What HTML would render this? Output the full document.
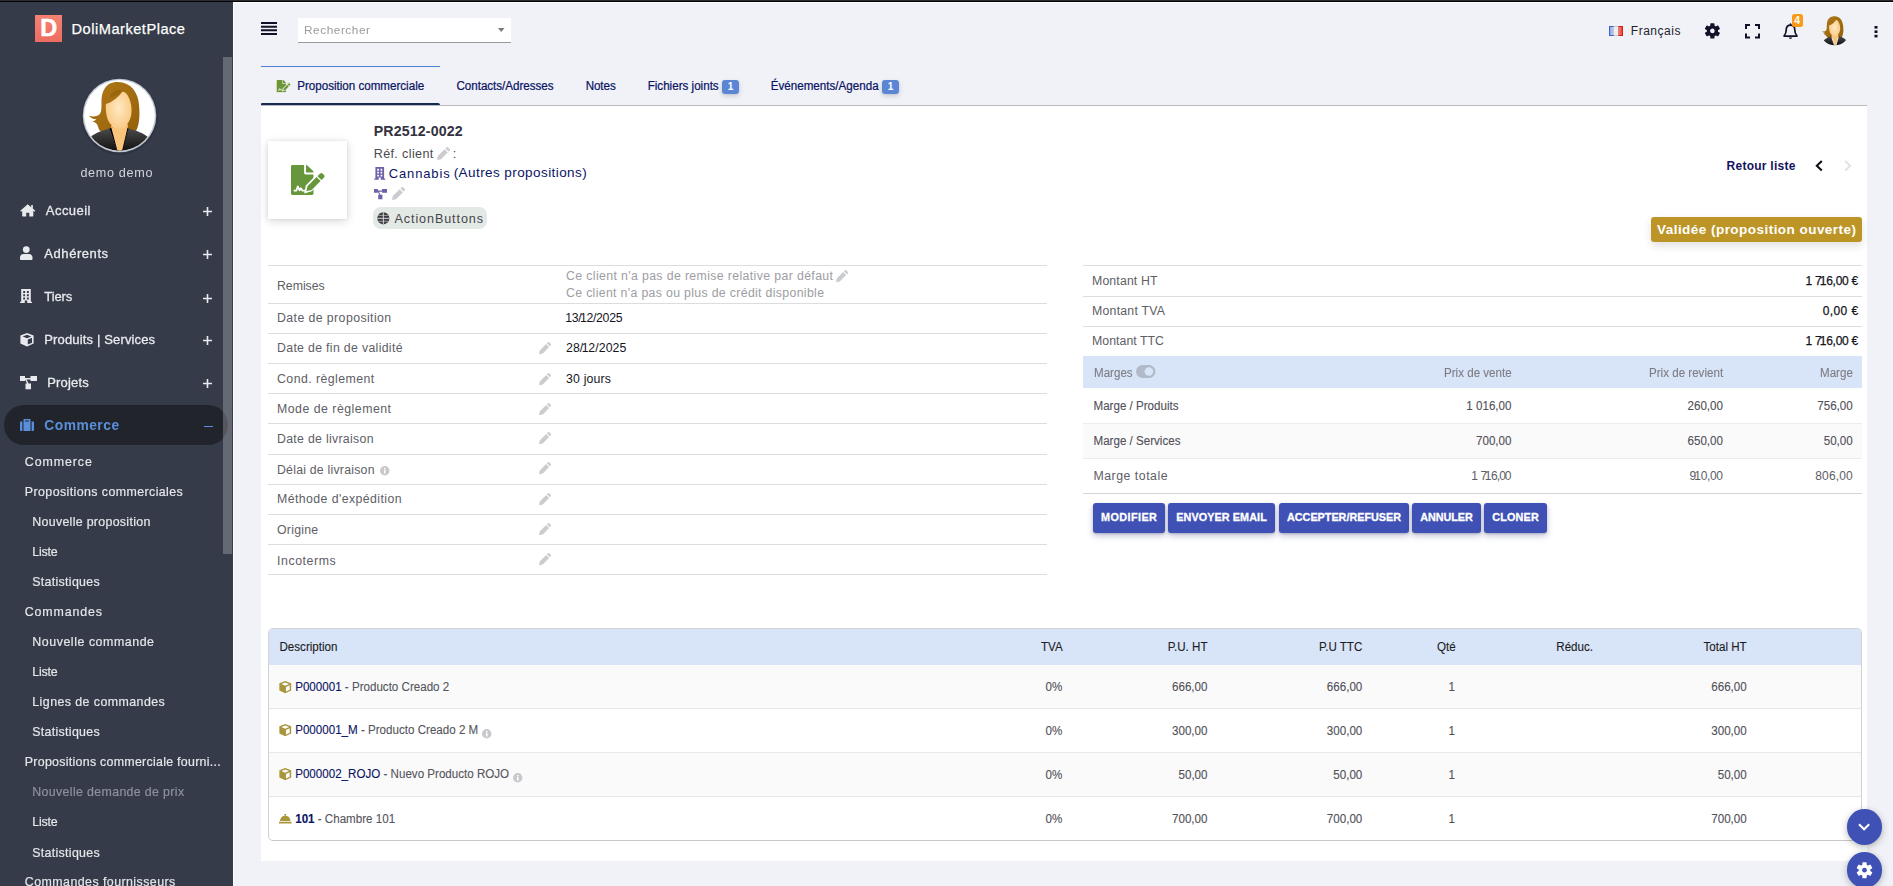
<!DOCTYPE html>
<html lang="fr"><head><meta charset="utf-8"><title>PR2512-0022 - Proposition commerciale</title>
<style>
html,body{margin:0;padding:0;}
body{width:1893px;height:886px;overflow:hidden;background:#f1f2f7;font-family:"Liberation Sans",sans-serif;position:relative;}
.t{position:absolute;white-space:nowrap;font-family:"Liberation Sans",sans-serif;}
.a{position:absolute;}
svg{position:absolute;overflow:visible;}
.hl{position:absolute;height:1px;background:#dcdcdc;}
.btn{position:absolute;top:503px;height:30px;background:#3f51b5;border-radius:3px;box-shadow:0 3px 6px rgba(40,50,120,.28),0 1px 2px rgba(0,0,0,.18);}
</style></head><body>
<div class="a" style="left:0;top:0;width:233px;height:886px;background:#353b48;"></div>
<div class="a" style="left:233px;top:2px;width:1px;height:884px;background:#fff;"></div>
<div class="a" style="left:4px;top:405px;width:224px;height:40px;border-radius:20px;background:#21242b;"></div>
<div class="a" style="left:223px;top:57px;width:9px;height:497px;background:rgba(255,255,255,.24);"></div>
<div class="a" style="left:0;top:0;width:1893px;height:1px;background:#2b2b33;z-index:5;"></div><div class="a" style="left:0;top:1px;width:1893px;height:1px;background:#030304;z-index:5;"></div><div class="a" style="left:233px;top:2px;width:1660px;height:1px;background:#fff;"></div>
<div class="a" style="left:35px;top:15px;width:27px;height:27px;background:linear-gradient(#f58273,#ee6c60);"></div>
<span class="t" style="top:12.20px;font-size:23.5px;line-height:33px;color:#fff;font-weight:700;left:40.30px;-webkit-text-stroke:.5px;">D</span>
<span class="t" style="top:19.00px;font-size:14.6px;line-height:20px;color:#fff;letter-spacing:0.517px;left:71.50px;-webkit-text-stroke:.25px;">DoliMarketPlace</span>
<svg style="left:81px;top:77px" width="77" height="77" viewBox="0 0 77 77">
<defs><radialGradient id="fc" cx="50%" cy="40%" r="60%"><stop offset="0" stop-color="#ffe9c4"/><stop offset="1" stop-color="#f9c57c"/></radialGradient>
<linearGradient id="jk" x1="0" y1="0" x2="0" y2="1"><stop offset="0" stop-color="#4a4a4a"/><stop offset="1" stop-color="#0a0a0a"/></linearGradient>
<linearGradient id="hr" x1="0" y1="0" x2="1" y2="1"><stop offset="0" stop-color="#b07a18"/><stop offset="1" stop-color="#96600a"/></linearGradient>
<clipPath id="cp"><circle cx="38.5" cy="38.5" r="35.2"/></clipPath></defs>
<circle cx="38.5" cy="39.500" r="38.500" fill="rgba(0,0,0,.10)"/>
<circle cx="38.5" cy="38.5" r="36.800" fill="#bfc7d6"/>
<circle cx="38.5" cy="38.5" r="35.400" fill="#fff"/>
<g clip-path="url(#cp)">
<path d="M37 5 C25 4.500 20.500 14 20.500 25 C20.500 34 20.500 37.500 15.500 39 C11.500 40 8 38.800 8 38.800 C10 41.500 13 42.500 15.500 42.300 C14 44 11.500 44.500 11.500 44.500 C18 46 16.500 51 19 54 L55 54 C58.500 48 59 38 58 28 C57 15 50 5.500 37 5 Z" fill="url(#hr)"/>
<path d="M24.800 27 C24.500 38 26.500 44.500 30.500 48 L29.500 56 L47.500 56 L46.500 46.500 C50 42.500 51.200 36 50.200 28.500 C48.500 18.500 44.500 14.500 41.300 14.800 C37.500 20 31 25.500 24.800 27 Z" fill="url(#fc)"/>
<path d="M28.500 20.500 C33 20.500 38.500 16.500 41.500 13.500 C37 11.500 30.500 13.500 28.500 20.500 Z" fill="#9a650c"/>
<path d="M8 62 C11 57 20 54 28.500 51.500 L36 73 L41 73 L47.500 51.500 C55 53.500 63 56 68 61 L62 77 L14 77 Z" fill="url(#jk)"/>
<path d="M28.500 51.500 L31.500 50 L38 74 L36 74 Z" fill="#000"/><path d="M47.500 51.500 L45.500 50 L39.500 74 L41.500 74 Z" fill="#000"/>
<path d="M30 49.500 L36.500 74 L41 74 L46.800 49.500 C42 52.500 35 52.500 30 49.500 Z" fill="#f9c57c"/>
</g></svg>
<div class="a" style="left:0;top:0;width:222px;height:886px;will-change:transform;">
<span class="t" style="top:164.20px;font-size:12.6px;line-height:18px;color:#d3d6db;letter-spacing:0.687px;left:80.40px;">demo demo</span>
<svg style="left:20px;top:204px" width="15.500" height="12.500" viewBox="0 0 16 13"><path fill="#e9eaee" d="M8 0.300 L0.200 6.900 L1.100 8 L2.200 7.100 V12.300 a.7 .7 0 0 0 .7 .7 H6.400 V9 H9.600 V13 H13.100 a.7 .7 0 0 0 .7 -.7 V7.100 L14.900 8 L15.800 6.900 L13.300 4.800 V1 H11.600 V3.300 Z"/></svg>
<span class="t" style="top:201.60px;font-size:13px;line-height:18px;color:#e9eaee;letter-spacing:0.466px;left:45.80px;-webkit-text-stroke:.3px;">Accueil</span>
<svg style="left:203px;top:207.4px" width="9" height="9" viewBox="0 0 9 9"><path d="M4.500 0V9M0 4.500H9" stroke="#e9eaee" stroke-width="1.600" fill="none"/></svg>
<svg style="left:20px;top:246px" width="12.500" height="14" viewBox="0 0 12.500 14"><circle cx="6.250" cy="3.600" r="3.400" fill="#e9eaee"/><path fill="#e9eaee" d="M0 13 V11.400 C0 9.300 1.600 8 3.500 8 H9 C10.900 8 12.500 9.300 12.500 11.400 V13 a1 1 0 0 1 -1 1 H1 a1 1 0 0 1 -1 -1Z"/></svg>
<span class="t" style="top:244.60px;font-size:13px;line-height:18px;color:#e9eaee;letter-spacing:0.566px;left:44.30px;-webkit-text-stroke:.3px;">Adhérents</span>
<svg style="left:203px;top:250.2px" width="9" height="9" viewBox="0 0 9 9"><path d="M4.500 0V9M0 4.500H9" stroke="#e9eaee" stroke-width="1.600" fill="none"/></svg>
<svg style="left:20px;top:289.300px" width="12" height="14" viewBox="0 0 12 14"><path fill-rule="evenodd" fill="#e9eaee" d="M1.200 0 H10.800 V12.800 H12 V14 H7.200 V11.600 H4.800 V14 H0 V12.800 H1.200 Z M3.200 2 V4 H5.100 V2 Z M6.900 2 V4 H8.800 V2Z M3.200 5.300 V7.300 H5.100 V5.300Z M6.900 5.300 V7.300H8.800V5.300Z M3.200 8.600 V10.600 H5.100 V8.600Z M6.900 8.600V10.600H8.800V8.600Z"/></svg>
<span class="t" style="top:288.00px;font-size:13px;line-height:18px;color:#e9eaee;letter-spacing:-0.128px;left:44.30px;-webkit-text-stroke:.3px;">Tiers</span>
<svg style="left:203px;top:293.5px" width="9" height="9" viewBox="0 0 9 9"><path d="M4.500 0V9M0 4.500H9" stroke="#e9eaee" stroke-width="1.600" fill="none"/></svg>
<svg style="left:20px;top:332.600px" width="14" height="13.600" viewBox="0 0 14 13.600"><path fill-rule="evenodd" fill="#e9eaee" d="M7 0 L13.600 2.600 V10.600 L7 13.600 L0.400 10.600 V2.600 Z M7 1.700 L2.700 3.400 L7 5.200 L11.300 3.400 Z M7.800 6.600 V11.600 L12 9.700 V4.800 Z"/></svg>
<span class="t" style="top:330.70px;font-size:13px;line-height:18px;color:#e9eaee;letter-spacing:0.147px;left:44.30px;-webkit-text-stroke:.3px;">Produits | Services</span>
<svg style="left:203px;top:336.2px" width="9" height="9" viewBox="0 0 9 9"><path d="M4.500 0V9M0 4.500H9" stroke="#e9eaee" stroke-width="1.600" fill="none"/></svg>
<svg style="left:20px;top:375.500px" width="17" height="13.200" viewBox="0 0 17 13.200"><path fill="#e9eaee" d="M0 0 H5 V2 H10.500 V0 H17 V5 H10.500 V3.400 H6.500 L8.600 7.600 H11 V13.200 H5.500 V7.600 H7 L5 3.600 V5 H0 Z"/></svg>
<span class="t" style="top:373.70px;font-size:13px;line-height:18px;color:#e9eaee;letter-spacing:0.172px;left:47.20px;-webkit-text-stroke:.3px;">Projets</span>
<svg style="left:203px;top:379.2px" width="9" height="9" viewBox="0 0 9 9"><path d="M4.500 0V9M0 4.500H9" stroke="#e9eaee" stroke-width="1.600" fill="none"/></svg>
<svg style="left:20px;top:419.300px" width="14" height="12" viewBox="0 0 14 12"><path fill-rule="evenodd" fill="#5b8fdb" d="M4.300 0 H9.700 a.8 .8 0 0 1 .8 .8 V12 H3.500 V.8 a.8 .8 0 0 1 .8 -.8 Z M5 1.500 V2.600 H9 V1.500 Z M0 3.600 a1 1 0 0 1 1 -1 H2.400 V12 H1 a1 1 0 0 1 -1 -1 Z M11.600 2.600 H13 a1 1 0 0 1 1 1 V11 a1 1 0 0 1 -1 1 H11.600 Z"/></svg>
<span class="t" style="top:416.20px;font-size:13.8px;line-height:19px;color:#5b8fdb;font-weight:700;letter-spacing:0.495px;left:44.30px;">Commerce</span>
<div class="a" style="left:204px;top:426.200px;width:9px;height:1.300px;background:#5b8fdb;"></div>
<span class="t" style="top:453.50px;font-size:12.4px;line-height:17px;color:#e4e6ea;letter-spacing:0.916px;left:24.80px;-webkit-text-stroke:.2px;">Commerce</span>
<span class="t" style="top:483.60px;font-size:12.4px;line-height:17px;color:#e4e6ea;letter-spacing:0.414px;left:24.80px;-webkit-text-stroke:.2px;">Propositions commerciales</span>
<span class="t" style="top:513.50px;font-size:12.4px;line-height:17px;color:#e4e6ea;letter-spacing:0.301px;left:32.30px;-webkit-text-stroke:.2px;">Nouvelle proposition</span>
<span class="t" style="top:543.80px;font-size:12.4px;line-height:17px;color:#e4e6ea;letter-spacing:-0.222px;left:32.30px;-webkit-text-stroke:.2px;">Liste</span>
<span class="t" style="top:573.70px;font-size:12.4px;line-height:17px;color:#e4e6ea;letter-spacing:0.304px;left:32.30px;-webkit-text-stroke:.2px;">Statistiques</span>
<span class="t" style="top:603.50px;font-size:12.4px;line-height:17px;color:#e4e6ea;letter-spacing:0.868px;left:24.80px;-webkit-text-stroke:.2px;">Commandes</span>
<span class="t" style="top:633.60px;font-size:12.4px;line-height:17px;color:#e4e6ea;letter-spacing:0.547px;left:32.30px;-webkit-text-stroke:.2px;">Nouvelle commande</span>
<span class="t" style="top:663.70px;font-size:12.4px;line-height:17px;color:#e4e6ea;letter-spacing:-0.222px;left:32.30px;-webkit-text-stroke:.2px;">Liste</span>
<span class="t" style="top:693.80px;font-size:12.4px;line-height:17px;color:#e4e6ea;letter-spacing:0.435px;left:32.30px;-webkit-text-stroke:.2px;">Lignes de commandes</span>
<span class="t" style="top:723.70px;font-size:12.4px;line-height:17px;color:#e4e6ea;letter-spacing:0.304px;left:32.30px;-webkit-text-stroke:.2px;">Statistiques</span>
<span class="t" style="top:753.80px;font-size:12.4px;line-height:17px;color:#e4e6ea;letter-spacing:0.281px;left:24.80px;-webkit-text-stroke:.2px;">Propositions commerciale fourni...</span>
<span class="t" style="top:783.90px;font-size:12.4px;line-height:17px;color:#8c919b;letter-spacing:0.341px;left:32.30px;-webkit-text-stroke:.2px;">Nouvelle demande de prix</span>
<span class="t" style="top:813.80px;font-size:12.4px;line-height:17px;color:#e4e6ea;letter-spacing:-0.222px;left:32.30px;-webkit-text-stroke:.2px;">Liste</span>
<span class="t" style="top:844.60px;font-size:12.4px;line-height:17px;color:#e4e6ea;letter-spacing:0.304px;left:32.30px;-webkit-text-stroke:.2px;">Statistiques</span>
<span class="t" style="top:874.40px;font-size:12.4px;line-height:17px;color:#e4e6ea;letter-spacing:0.443px;left:24.80px;-webkit-text-stroke:.2px;">Commandes fournisseurs</span>
</div>
<svg style="left:261px;top:22px" width="16" height="13" viewBox="0 0 16 13"><path d="M0 1H16M0 4.670H16M0 8.330H16M0 12H16" stroke="#111127" stroke-width="2" fill="none"/></svg>
<div class="a" style="left:298px;top:18px;width:213px;height:24px;background:#fff;border-bottom:1px solid #9a9a9a;"></div>
<span class="t" style="top:22.10px;font-size:11.8px;line-height:17px;color:#9b9b9b;letter-spacing:0.556px;left:303.50px;will-change:transform;">Rechercher</span>
<svg style="left:498px;top:28px" width="6.500" height="4" viewBox="0 0 6.500 4"><path d="M0 0H6.500L3.250 4Z" fill="#7a7a7a"/></svg>
<svg style="left:1609px;top:26px" width="14" height="10" viewBox="0 0 14 10"><defs><linearGradient id="fb" x1="0" x2="1"><stop offset="0" stop-color="#8ea9e6"/><stop offset="1" stop-color="#c4d1f0"/></linearGradient><linearGradient id="fr" x1="0" x2="1"><stop offset="0" stop-color="#f08a7c"/><stop offset="1" stop-color="#e84a3e"/></linearGradient></defs><rect x="0" y="0" width="5" height="10" fill="#3a66cc"/><rect x="1" y="1" width="3.700" height="8" fill="url(#fb)"/><rect x="4.700" y="0" width="4.600" height="10" fill="#c9c9cc"/><rect x="4.700" y="1" width="4.600" height="8" fill="#efefef"/><rect x="9.300" y="0" width="4.700" height="10" fill="#d91c1c"/><rect x="9.300" y="1" width="3.700" height="8" fill="url(#fr)"/></svg>
<span class="t" style="top:23.40px;font-size:12px;line-height:17px;color:#23232b;letter-spacing:0.511px;left:1630.80px;">Français</span>
<svg style="left:1704px;top:23px" width="17" height="16" viewBox="0 0 17 16"><path fill-rule="evenodd" fill="#111127" stroke="#111127" stroke-width="1.400" stroke-linejoin="round" d="M6.93 3.15 L6.99 0.94 L9.81 0.94 L9.87 3.15 L11.78 4.25 L13.72 3.20 L15.13 5.64 L13.25 6.80 L13.25 9.00 L15.13 10.16 L13.72 12.60 L11.78 11.55 L9.87 12.65 L9.81 14.86 L6.99 14.86 L6.93 12.65 L5.02 11.55 L3.08 12.60 L1.67 10.16 L3.55 9.00 L3.55 6.80 L1.67 5.64 L3.08 3.20 L5.02 4.25Z M5.42 7.90 a2.98 2.98 0 1 0 5.96 0 a2.98 2.98 0 1 0 -5.96 0Z"/></svg>
<svg style="left:1744.500px;top:24px" width="15" height="14.500" viewBox="0 0 15 14.500"><path d="M1 5V1H5M10 1H14V5M14 9.500V13.500H10M5 13.500H1V9.500" stroke="#111127" stroke-width="2" fill="none"/></svg>
<svg style="left:1783px;top:22.500px" width="15" height="17" viewBox="0 0 15 17"><path d="M7.500 1.200 V2.200 M7.500 2.200 C4.600 2.200 3.200 4.400 3.200 7 C3.200 10 2.400 11.300 1.200 12.500 V13.200 H13.800 V12.500 C12.600 11.300 11.800 10 11.800 7 C11.800 4.400 10.400 2.200 7.500 2.200Z" stroke="#111127" stroke-width="1.700" fill="none" stroke-linejoin="round" stroke-linecap="round"/><path d="M5.700 14.600 a1.850 1.850 0 0 0 3.600 0Z" fill="#111127"/></svg>
<div class="a" style="left:1792px;top:14px;width:11px;height:12.500px;background:#fb9a17;border-radius:2.500px;"></div>
<span class="t" style="top:12.90px;font-size:10.5px;line-height:15px;color:#fff;font-weight:700;left:1794.30px;">4</span>
<svg style="left:1820px;top:15px" width="30" height="31" viewBox="0 0 77 80">
<defs><clipPath id="cp2"><circle cx="38" cy="40" r="38"/></clipPath></defs>
<g clip-path="url(#cp2)">
<path d="M38 3 C24 2 18 12 17.500 24 C17 36 18 40 12 42 C8 43.500 5 41 5 41 C7 45 11 46 13 46 C11 48 9 49 9 49 C16 51 16 56 19 58 L56 58 C60 51 61 40 59.500 28 C58 14 52 4 38 3 Z" fill="url(#hr)"/>
<path d="M23 27 C23 40 25 47 30 51 L30 60 L47 60 L47 49 C51 45 53 38 51.500 29 C49.500 18 45 13 41 13 C37 19 30 26 23 27 Z" fill="url(#fc)"/>
<path d="M3 80 C4 66 18 58 28 55 L36 78 L42 78 L49 55 C58 57 72 64 74 80 Z" fill="url(#jk)"/>
<path d="M30.500 52 L37 79 L41 79 L46.500 52 C42 56 35 56 30.500 52 Z" fill="#f9c57c"/>
</g></svg>
<svg style="left:1874px;top:26px" width="4" height="12" viewBox="0 0 4 12"><rect x="0.500" y="0" width="3" height="2.600" fill="#111127"/><rect x="0.500" y="4.400" width="3" height="2.600" fill="#111127"/><rect x="0.500" y="8.800" width="3" height="2.600" fill="#111127"/></svg>
<div class="a" style="left:261px;top:66px;width:179px;height:1px;background:#4b80d4;"></div>
<div class="a" style="left:261px;top:103px;width:179px;height:2px;background:#162a52;border-radius:1px 2px 0 0;"></div>
<div class="a" style="left:261px;top:105px;width:1606px;height:756px;background:#fff;"></div>
<div class="a" style="left:261px;top:105px;width:1606px;height:1px;background:#b9b9bb;"></div>
<svg style="left:276.5px;top:79.5px" width="13.50" height="12" viewBox="0 0 576 512"><g transform="translate(-22,10)"><path fill="#d9b44a" d="M24 0H224V136a24 24 0 0 0 24 24H384V488a24 24 0 0 1-24 24H24a24 24 0 0 1-24-24V24A24 24 0 0 1 24 0Z"/>
<path fill="#d9b44a" d="M256 0V128H384V121a24 24 0 0 0-7-17L280 7a24 24 0 0 0-17-7Z"/>
<path d="M58 436H92L116 364L146 432L168 396L192 436H250" stroke="#d9b44a" stroke-width="30" fill="none" stroke-linejoin="round" stroke-linecap="round"/>
<path fill="#d9b44a" d="M226 486L252 348L520 80L622 182L354 450Z"/>
<path fill="#d9b44a" d="M262 448L284 358L436 206L504 274L352 426Z"/>
<path fill="#d9b44a" d="M452 190L494 148a34 34 0 0 1 48 0L562 168a34 34 0 0 1 0 48L520 258Z"/></g><path fill="#6a973d" d="M24 0H224V136a24 24 0 0 0 24 24H384V488a24 24 0 0 1-24 24H24a24 24 0 0 1-24-24V24A24 24 0 0 1 24 0Z"/>
<path fill="#6a973d" d="M256 0V128H384V121a24 24 0 0 0-7-17L280 7a24 24 0 0 0-17-7Z"/>
<path d="M58 436H92L116 364L146 432L168 396L192 436H250" stroke="#fff" stroke-width="30" fill="none" stroke-linejoin="round" stroke-linecap="round"/>
<path fill="#fff" d="M226 486L252 348L520 80L622 182L354 450Z"/>
<path fill="#6a973d" d="M262 448L284 358L436 206L504 274L352 426Z"/>
<path fill="#6a973d" d="M452 190L494 148a34 34 0 0 1 48 0L562 168a34 34 0 0 1 0 48L520 258Z"/></svg>
<span class="t" style="top:77.50px;font-size:11.6px;line-height:16px;color:#0a1464;letter-spacing:0.002px;left:297.20px;-webkit-text-stroke:.22px;transform:scaleY(1.11);">Proposition commerciale</span>
<span class="t" style="top:77.50px;font-size:11.6px;line-height:16px;color:#0a1464;letter-spacing:-0.019px;left:456.50px;-webkit-text-stroke:.22px;transform:scaleY(1.11);">Contacts/Adresses</span>
<span class="t" style="top:77.50px;font-size:11.6px;line-height:16px;color:#0a1464;letter-spacing:-0.073px;left:585.70px;-webkit-text-stroke:.22px;transform:scaleY(1.11);">Notes</span>
<span class="t" style="top:77.50px;font-size:11.6px;line-height:16px;color:#0a1464;letter-spacing:0.008px;left:647.70px;-webkit-text-stroke:.22px;transform:scaleY(1.11);">Fichiers joints</span>
<span class="t" style="top:77.50px;font-size:11.6px;line-height:16px;color:#0a1464;letter-spacing:0.022px;left:770.70px;-webkit-text-stroke:.22px;transform:scaleY(1.11);">Événements/Agenda</span>
<div class="a" style="left:722px;top:80px;width:17px;height:13.700px;background:#5b86d6;border-radius:3px;box-shadow:0 2px 5px rgba(0,0,0,.18);"></div>
<span class="t" style="top:80.10px;font-size:10px;line-height:14px;color:#fff;font-weight:700;left:727.80px;">1</span>
<div class="a" style="left:882px;top:80px;width:17px;height:13.700px;background:#5b86d6;border-radius:3px;box-shadow:0 2px 5px rgba(0,0,0,.18);"></div>
<span class="t" style="top:80.10px;font-size:10px;line-height:14px;color:#fff;font-weight:700;left:887.80px;">1</span>
<div class="a" style="left:268px;top:141px;width:79px;height:78px;background:#fff;box-shadow:0 2px 9px rgba(0,0,0,.16),0 0 3px rgba(0,0,0,.08);"></div>
<svg style="left:290.5px;top:165px" width="33.75" height="30" viewBox="0 0 576 512"><path fill="#67963b" d="M24 0H224V136a24 24 0 0 0 24 24H384V488a24 24 0 0 1-24 24H24a24 24 0 0 1-24-24V24A24 24 0 0 1 24 0Z"/>
<path fill="#67963b" d="M256 0V128H384V121a24 24 0 0 0-7-17L280 7a24 24 0 0 0-17-7Z"/>
<path d="M58 436H92L116 364L146 432L168 396L192 436H250" stroke="#fff" stroke-width="30" fill="none" stroke-linejoin="round" stroke-linecap="round"/>
<path fill="#fff" d="M226 486L252 348L520 80L622 182L354 450Z"/>
<path fill="#67963b" d="M262 448L284 358L436 206L504 274L352 426Z"/>
<path fill="#67963b" d="M452 190L494 148a34 34 0 0 1 48 0L562 168a34 34 0 0 1 0 48L520 258Z"/></svg>
<span class="t" style="top:121.00px;font-size:14.2px;line-height:20px;color:#33333f;font-weight:700;letter-spacing:0.144px;left:373.70px;">PR2512-0022</span>
<span class="t" style="top:144.50px;font-size:12.6px;line-height:18px;color:#4a4a50;letter-spacing:0.359px;left:373.70px;">Réf. client</span>
<svg style="left:437px;top:146.8px" width="13" height="13" viewBox="0 0 13 13"><path fill="#cbccd0" d="M0 13 L0.800 9 L7.600 2.200 L10.800 5.400 L4 12.200 Z M8.400 1.400 L9.500 0.300 a1.100 1.100 0 0 1 1.500 0 L12.700 2 a1.100 1.100 0 0 1 0 1.500 L11.600 4.600 Z"/></svg>
<span class="t" style="top:144.50px;font-size:12.6px;line-height:18px;color:#4a4a50;left:452.80px;">:</span>
<svg style="left:373.500px;top:166.800px" width="11.500" height="12.700" viewBox="0 0 12 14"><path fill-rule="evenodd" fill="#6c62a8" d="M1.200 0 H10.800 V12.800 H12 V14 H7.200 V11.600 H4.800 V14 H0 V12.800 H1.200 Z M3.200 2 V4 H5.100 V2 Z M6.900 2 V4 H8.800 V2Z M3.200 5.300 V7.300 H5.100 V5.300Z M6.900 5.300 V7.300H8.800V5.300Z M3.200 8.600 V10.600 H5.100 V8.600Z M6.900 8.600V10.600H8.800V8.600Z"/></svg>
<span class="t" style="top:164.60px;font-size:13px;line-height:18px;color:#0a1464;letter-spacing:0.866px;left:388.70px;">Cannabis</span>
<span class="t" style="top:162.90px;font-size:13.5px;line-height:19px;color:#0a1464;letter-spacing:0.422px;left:453.70px;">(Autres propositions)</span>
<svg style="left:373.500px;top:188.800px" width="13" height="10.200" viewBox="0 0 17 13.200"><path fill="#6c62a8" d="M0 0 H5 V2 H10.500 V0 H17 V5 H10.500 V3.400 H6.500 L8.600 7.600 H11 V13.200 H5.500 V7.600 H7 L5 3.600 V5 H0 Z"/></svg>
<svg style="left:391.5px;top:186.5px" width="13" height="13" viewBox="0 0 13 13"><path fill="#cbccd0" d="M0 13 L0.800 9 L7.600 2.200 L10.800 5.400 L4 12.200 Z M8.400 1.400 L9.500 0.300 a1.100 1.100 0 0 1 1.500 0 L12.700 2 a1.100 1.100 0 0 1 0 1.500 L11.600 4.600 Z"/></svg>
<div class="a" style="left:373px;top:207px;width:114px;height:22px;background:#e3e9e4;border-radius:8px;"></div>
<svg style="left:377px;top:211.800px" width="12.700" height="12.700" viewBox="0 0 13 13"><circle cx="6.500" cy="6.500" r="6.200" fill="#3c3c44"/><path d="M6.500 0.300V12.700M0.300 6.500H12.700" stroke="#e3e9e4" stroke-width="0.900" fill="none"/><path d="M1.300 3.500H11.700M1.300 9.500H11.700" stroke="#e3e9e4" stroke-width="0.600" fill="none"/><path d="M6.500 0.300#3c3c442.800 3 2.800 10 6.500 12.700M6.500 0.300#3c3c4410.200 3 10.200 10 6.500 12.700" stroke="#e3e9e4" stroke-width="0.800" fill="none"/></svg>
<span class="t" style="top:210.20px;font-size:12.6px;line-height:18px;color:#45454d;letter-spacing:0.899px;left:394.50px;">ActionButtons</span>
<span class="t" style="top:157.80px;font-size:12px;line-height:17px;color:#14145e;font-weight:700;letter-spacing:0.252px;left:1726.60px;">Retour liste</span>
<svg style="left:1815px;top:160px" width="8" height="11.500" viewBox="0 0 8 11.500"><path d="M6.800 1L1.800 5.750L6.800 10.500" stroke="#0c0c14" stroke-width="2" fill="none"/></svg>
<svg style="left:1843.500px;top:160px" width="8" height="11.500" viewBox="0 0 8 11.500"><path d="M1.200 1L6.200 5.750L1.200 10.500" stroke="#e1e1e4" stroke-width="1.800" fill="none"/></svg>
<div class="a" style="left:1651px;top:217px;width:211px;height:25px;background:#bc9526;border-radius:3px;box-shadow:0 4px 8px rgba(0,0,0,.12);"></div>
<span class="t" style="top:219.90px;font-size:13.5px;line-height:19px;color:#fff;font-weight:700;letter-spacing:0.462px;left:1657.00px;">Validée (proposition ouverte)</span>
<div class="hl" style="left:268px;top:265px;width:779px;background:#dddddf;"></div>
<div class="hl" style="left:268px;top:303px;width:779px;background:#dddddf;"></div>
<div class="hl" style="left:268px;top:333px;width:779px;background:#dddddf;"></div>
<div class="hl" style="left:268px;top:363px;width:779px;background:#dddddf;"></div>
<div class="hl" style="left:268px;top:393px;width:779px;background:#dddddf;"></div>
<div class="hl" style="left:268px;top:423px;width:779px;background:#dddddf;"></div>
<div class="hl" style="left:268px;top:454px;width:779px;background:#dddddf;"></div>
<div class="hl" style="left:268px;top:484px;width:779px;background:#dddddf;"></div>
<div class="hl" style="left:268px;top:514px;width:779px;background:#dddddf;"></div>
<div class="hl" style="left:268px;top:544px;width:779px;background:#dddddf;"></div>
<div class="hl" style="left:268px;top:574px;width:779px;background:#dddddf;"></div>
<span class="t" style="top:277.60px;font-size:12.3px;line-height:17px;color:#5e5e66;letter-spacing:-0.023px;left:277.00px;">Remises</span>
<span class="t" style="top:268.40px;font-size:12.3px;line-height:17px;color:#9d9da3;letter-spacing:0.374px;left:566.00px;">Ce client n'a pas de remise relative par défaut</span>
<svg style="left:836px;top:270.2px" width="12.2" height="12.2" viewBox="0 0 13 13"><path fill="#cbccd0" d="M0 13 L0.800 9 L7.600 2.200 L10.800 5.400 L4 12.200 Z M8.400 1.400 L9.500 0.300 a1.100 1.100 0 0 1 1.500 0 L12.700 2 a1.100 1.100 0 0 1 0 1.500 L11.600 4.600 Z"/></svg>
<span class="t" style="top:285.10px;font-size:12.3px;line-height:17px;color:#9d9da3;letter-spacing:0.334px;left:566.00px;">Ce client n'a pas ou plus de crédit disponible</span>
<span class="t" style="top:309.90px;font-size:12.3px;line-height:17px;color:#5e5e66;letter-spacing:0.420px;left:277.00px;">Date de proposition</span>
<span class="t" style="top:309.90px;font-size:12.3px;line-height:17px;color:#15151d;letter-spacing:-0.311px;left:566.00px;"><span style="margin-left:-0.8px;letter-spacing:-0.3px">1</span>3/<span style="margin-left:-1.5px;letter-spacing:-0.3px">1</span>2/2025</span>
<span class="t" style="top:339.90px;font-size:12.3px;line-height:17px;color:#5e5e66;letter-spacing:0.329px;left:277.00px;">Date de fin de validité</span>
<svg style="left:538.9px;top:341.5px" width="12.2" height="12.2" viewBox="0 0 13 13"><path fill="#cbccd0" d="M0 13 L0.800 9 L7.600 2.200 L10.800 5.400 L4 12.200 Z M8.400 1.400 L9.500 0.300 a1.100 1.100 0 0 1 1.500 0 L12.700 2 a1.100 1.100 0 0 1 0 1.500 L11.600 4.600 Z"/></svg>
<span class="t" style="top:339.90px;font-size:12.3px;line-height:17px;color:#15151d;letter-spacing:0.068px;left:566.00px;">28/<span style="margin-left:-1.5px;letter-spacing:-0.3px">1</span>2/2025</span>
<span class="t" style="top:370.80px;font-size:12.3px;line-height:17px;color:#5e5e66;letter-spacing:0.455px;left:277.00px;">Cond. règlement</span>
<svg style="left:538.9px;top:372.7px" width="12.2" height="12.2" viewBox="0 0 13 13"><path fill="#cbccd0" d="M0 13 L0.800 9 L7.600 2.200 L10.800 5.400 L4 12.200 Z M8.400 1.400 L9.500 0.300 a1.100 1.100 0 0 1 1.500 0 L12.700 2 a1.100 1.100 0 0 1 0 1.500 L11.600 4.600 Z"/></svg>
<span class="t" style="top:370.80px;font-size:12.3px;line-height:17px;color:#15151d;letter-spacing:0.178px;left:566.00px;">30 jours</span>
<span class="t" style="top:401.10px;font-size:12.3px;line-height:17px;color:#5e5e66;letter-spacing:0.503px;left:277.00px;">Mode de règlement</span>
<svg style="left:538.9px;top:402.79999999999995px" width="12.2" height="12.2" viewBox="0 0 13 13"><path fill="#cbccd0" d="M0 13 L0.800 9 L7.600 2.200 L10.800 5.400 L4 12.200 Z M8.400 1.400 L9.500 0.300 a1.100 1.100 0 0 1 1.500 0 L12.700 2 a1.100 1.100 0 0 1 0 1.500 L11.600 4.600 Z"/></svg>
<span class="t" style="top:430.90px;font-size:12.3px;line-height:17px;color:#5e5e66;letter-spacing:0.306px;left:277.00px;">Date de livraison</span>
<svg style="left:538.9px;top:432.4px" width="12.2" height="12.2" viewBox="0 0 13 13"><path fill="#cbccd0" d="M0 13 L0.800 9 L7.600 2.200 L10.800 5.400 L4 12.200 Z M8.400 1.400 L9.500 0.300 a1.100 1.100 0 0 1 1.500 0 L12.700 2 a1.100 1.100 0 0 1 0 1.500 L11.600 4.600 Z"/></svg>
<span class="t" style="top:462.00px;font-size:12.3px;line-height:17px;color:#5e5e66;letter-spacing:0.226px;left:277.00px;">Délai de livraison</span>
<svg style="left:538.9px;top:462.29999999999995px" width="12.2" height="12.2" viewBox="0 0 13 13"><path fill="#cbccd0" d="M0 13 L0.800 9 L7.600 2.200 L10.800 5.400 L4 12.200 Z M8.400 1.400 L9.500 0.300 a1.100 1.100 0 0 1 1.500 0 L12.700 2 a1.100 1.100 0 0 1 0 1.500 L11.600 4.600 Z"/></svg>
<span class="t" style="top:490.90px;font-size:12.3px;line-height:17px;color:#5e5e66;letter-spacing:0.425px;left:277.00px;">Méthode d'expédition</span>
<svg style="left:538.9px;top:492.5px" width="12.2" height="12.2" viewBox="0 0 13 13"><path fill="#cbccd0" d="M0 13 L0.800 9 L7.600 2.200 L10.800 5.400 L4 12.200 Z M8.400 1.400 L9.500 0.300 a1.100 1.100 0 0 1 1.500 0 L12.700 2 a1.100 1.100 0 0 1 0 1.500 L11.600 4.600 Z"/></svg>
<span class="t" style="top:522.30px;font-size:12.3px;line-height:17px;color:#5e5e66;letter-spacing:0.258px;left:277.00px;">Origine</span>
<svg style="left:538.9px;top:523.1999999999999px" width="12.2" height="12.2" viewBox="0 0 13 13"><path fill="#cbccd0" d="M0 13 L0.800 9 L7.600 2.200 L10.800 5.400 L4 12.200 Z M8.400 1.400 L9.500 0.300 a1.100 1.100 0 0 1 1.500 0 L12.700 2 a1.100 1.100 0 0 1 0 1.500 L11.600 4.600 Z"/></svg>
<span class="t" style="top:552.50px;font-size:12.3px;line-height:17px;color:#5e5e66;letter-spacing:0.589px;left:277.00px;">Incoterms</span>
<svg style="left:538.9px;top:553.1999999999999px" width="12.2" height="12.2" viewBox="0 0 13 13"><path fill="#cbccd0" d="M0 13 L0.800 9 L7.600 2.200 L10.800 5.400 L4 12.200 Z M8.400 1.400 L9.500 0.300 a1.100 1.100 0 0 1 1.500 0 L12.700 2 a1.100 1.100 0 0 1 0 1.500 L11.600 4.600 Z"/></svg>
<svg style="left:379.6px;top:465.7px" width="9.5" height="9.5" viewBox="0 0 10 10"><circle cx="5" cy="5" r="5" fill="#c9c9cd"/><rect x="4.200" y="4.300" width="1.600" height="3.600" fill="#fff"/><rect x="4.200" y="2.100" width="1.600" height="1.500" fill="#fff"/></svg>
<div class="hl" style="left:1083px;top:265px;width:779px;background:#dddddf;"></div>
<div class="hl" style="left:1083px;top:296px;width:779px;background:#dddddf;"></div>
<div class="hl" style="left:1083px;top:326px;width:779px;background:#dddddf;"></div>
<div class="a" style="left:1083px;top:356px;width:779px;height:32px;background:#d8e4f7;"></div>
<div class="a" style="left:1083px;top:424px;width:779px;height:34px;background:#fafafa;"></div>
<div class="hl" style="left:1083px;top:423px;width:779px;background:#ececee;"></div>
<div class="hl" style="left:1083px;top:458px;width:779px;background:#ececee;"></div>
<div class="hl" style="left:1083px;top:493px;width:779px;background:#d4d4d8;"></div>
<span class="t" style="top:272.80px;font-size:12.3px;line-height:17px;color:#5e5e66;letter-spacing:0.140px;left:1092.00px;">Montant HT</span>
<span class="t" style="top:302.80px;font-size:12.3px;line-height:17px;color:#5e5e66;letter-spacing:0.237px;left:1092.00px;">Montant TVA</span>
<span class="t" style="top:333.10px;font-size:12.3px;line-height:17px;color:#5e5e66;letter-spacing:0.047px;left:1092.00px;">Montant TTC</span>
<span class="t" style="top:273.00px;font-size:12px;line-height:17px;color:#15151d;letter-spacing:-0.268px;right:35.17px;-webkit-text-stroke:.25px #15151d;"><span style="margin-left:-0.8px;letter-spacing:-0.3px">1</span><span style="letter-spacing:-0.4px"> </span>7<span style="margin-left:-1.5px;letter-spacing:-0.3px">1</span>6,00<span style="letter-spacing:-0.4px"> </span>€</span>
<span class="t" style="top:302.90px;font-size:12px;line-height:17px;color:#15151d;letter-spacing:0.406px;right:34.49px;-webkit-text-stroke:.25px #15151d;">0,00 €</span>
<span class="t" style="top:333.00px;font-size:12px;line-height:17px;color:#15151d;letter-spacing:-0.268px;right:35.17px;-webkit-text-stroke:.25px #15151d;"><span style="margin-left:-0.8px;letter-spacing:-0.3px">1</span><span style="letter-spacing:-0.4px"> </span>7<span style="margin-left:-1.5px;letter-spacing:-0.3px">1</span>6,00<span style="letter-spacing:-0.4px"> </span>€</span>
<span class="t" style="top:364.50px;font-size:11.6px;line-height:16px;color:#7d7d84;left:1093.50px;will-change:transform;transform:scaleY(1.11);-webkit-text-stroke:.1px;">Marges</span>
<svg style="left:1135.500px;top:365px" width="19.500" height="13" viewBox="0 0 19.500 13"><rect x="0" y="0" width="19.500" height="13" rx="6.500" fill="#b1bac9"/><circle cx="12.900" cy="6.500" r="4.300" fill="#d8e4f7"/></svg>
<span class="t" style="top:364.50px;font-size:11.6px;line-height:16px;color:#7d7d84;right:381.50px;will-change:transform;transform:scaleY(1.11);-webkit-text-stroke:.1px;">Prix de vente</span>
<span class="t" style="top:364.50px;font-size:11.6px;line-height:16px;color:#7d7d84;right:170.00px;will-change:transform;transform:scaleY(1.11);-webkit-text-stroke:.1px;">Prix de revient</span>
<span class="t" style="top:364.50px;font-size:11.6px;line-height:16px;color:#7d7d84;right:40.30px;will-change:transform;transform:scaleY(1.11);-webkit-text-stroke:.1px;">Marge</span>
<span class="t" style="top:398.00px;font-size:11.6px;line-height:16px;color:#505058;left:1093.50px;transform:scaleY(1.11);-webkit-text-stroke:.1px;">Marge / Produits</span>
<span class="t" style="top:398.00px;font-size:11.6px;line-height:16px;color:#505058;right:381.50px;transform:scaleY(1.11);-webkit-text-stroke:.1px;">1 016,00</span>
<span class="t" style="top:398.00px;font-size:11.6px;line-height:16px;color:#505058;right:170.00px;transform:scaleY(1.11);-webkit-text-stroke:.1px;">260,00</span>
<span class="t" style="top:398.00px;font-size:11.6px;line-height:16px;color:#505058;right:40.30px;transform:scaleY(1.11);-webkit-text-stroke:.1px;">756,00</span>
<span class="t" style="top:433.00px;font-size:11.6px;line-height:16px;color:#505058;left:1093.50px;transform:scaleY(1.11);-webkit-text-stroke:.1px;">Marge / Services</span>
<span class="t" style="top:433.00px;font-size:11.6px;line-height:16px;color:#505058;right:381.50px;transform:scaleY(1.11);-webkit-text-stroke:.1px;">700,00</span>
<span class="t" style="top:433.00px;font-size:11.6px;line-height:16px;color:#505058;right:170.00px;transform:scaleY(1.11);-webkit-text-stroke:.1px;">650,00</span>
<span class="t" style="top:433.00px;font-size:11.6px;line-height:16px;color:#505058;right:40.30px;transform:scaleY(1.11);-webkit-text-stroke:.1px;">50,00</span>
<span class="t" style="top:468.00px;font-size:12.3px;line-height:17px;color:#5e5e66;letter-spacing:0.513px;left:1093.50px;">Marge totale</span>
<span class="t" style="top:468.00px;font-size:12px;line-height:17px;color:#5e5e66;letter-spacing:-0.972px;right:382.47px;"><span style="margin-left:-0.8px;letter-spacing:-0.3px">1</span><span style="letter-spacing:-0.4px"> </span>7<span style="margin-left:-1.5px;letter-spacing:-0.3px">1</span>6,00</span>
<span class="t" style="top:468.00px;font-size:12px;line-height:17px;color:#5e5e66;letter-spacing:-0.354px;right:170.35px;">9<span style="margin-left:-1.5px;letter-spacing:-0.3px">1</span>0,00</span>
<span class="t" style="top:468.00px;font-size:12px;line-height:17px;color:#5e5e66;letter-spacing:0.157px;right:40.14px;">806,00</span>
<div class="btn" style="left:1093px;width:72px;"></div>
<span class="t" style="top:510.30px;font-size:10.8px;line-height:15px;color:#fff;font-weight:700;letter-spacing:0.431px;left:1101.10px;-webkit-text-stroke:.3px #fff;">MODIFIER</span>
<div class="btn" style="left:1168px;width:107px;"></div>
<span class="t" style="top:510.30px;font-size:10.8px;line-height:15px;color:#fff;font-weight:700;letter-spacing:0.092px;left:1176.25px;-webkit-text-stroke:.3px #fff;">ENVOYER EMAIL</span>
<div class="btn" style="left:1279px;width:130px;"></div>
<span class="t" style="top:510.30px;font-size:10.8px;line-height:15px;color:#fff;font-weight:700;letter-spacing:0.001px;left:1287.00px;-webkit-text-stroke:.3px #fff;">ACCEPTER/REFUSER</span>
<div class="btn" style="left:1412px;width:69px;"></div>
<span class="t" style="top:510.30px;font-size:10.8px;line-height:15px;color:#fff;font-weight:700;letter-spacing:-0.048px;left:1420.25px;-webkit-text-stroke:.3px #fff;">ANNULER</span>
<div class="btn" style="left:1484px;width:63px;"></div>
<span class="t" style="top:510.30px;font-size:10.8px;line-height:15px;color:#fff;font-weight:700;letter-spacing:0.182px;left:1492.25px;-webkit-text-stroke:.3px #fff;">CLONER</span>
<div class="a" style="left:268px;top:628px;width:1592px;height:211px;border:1px solid #d2d2d6;border-radius:5px;border-bottom-color:#c8c8cb;background:#fff;overflow:hidden;"><div class="a" style="left:0;top:0;width:100%;height:36px;background:#d8e4f7;"></div><div class="a" style="left:0;top:36px;width:100%;height:43px;background:#fafafa;border-bottom:1px solid #e8e8ea;"></div><div class="a" style="left:0;top:80px;width:100%;height:43px;background:#fff;border-bottom:1px solid #e8e8ea;"></div><div class="a" style="left:0;top:124px;width:100%;height:43px;background:#fafafa;border-bottom:1px solid #e8e8ea;"></div></div>
<span class="t" style="top:639.00px;font-size:11.6px;line-height:16px;color:#1c1c24;left:279.50px;transform:scaleY(1.11);-webkit-text-stroke:.1px;">Description</span>
<span class="t" style="top:639.00px;font-size:11.6px;line-height:16px;color:#1c1c24;right:830.30px;transform:scaleY(1.11);-webkit-text-stroke:.1px;">TVA</span>
<span class="t" style="top:639.00px;font-size:11.6px;line-height:16px;color:#1c1c24;right:685.50px;transform:scaleY(1.11);-webkit-text-stroke:.1px;">P.U. HT</span>
<span class="t" style="top:639.00px;font-size:11.6px;line-height:16px;color:#1c1c24;right:530.70px;transform:scaleY(1.11);-webkit-text-stroke:.1px;">P.U TTC</span>
<span class="t" style="top:639.00px;font-size:11.6px;line-height:16px;color:#1c1c24;right:437.30px;transform:scaleY(1.11);-webkit-text-stroke:.1px;">Qté</span>
<span class="t" style="top:639.00px;font-size:11.6px;line-height:16px;color:#1c1c24;right:300.00px;transform:scaleY(1.11);-webkit-text-stroke:.1px;">Réduc.</span>
<span class="t" style="top:639.00px;font-size:11.6px;line-height:16px;color:#1c1c24;right:146.30px;transform:scaleY(1.11);-webkit-text-stroke:.1px;">Total HT</span>
<svg style="left:279px;top:680.5px" width="12.500" height="12.200" viewBox="0 0 14 13.600"><path fill-rule="evenodd" fill="#a8953c" d="M7 0 L13.600 2.600 V10.600 L7 13.600 L0.400 10.600 V2.600 Z M7 1.700 L2.700 3.400 L7 5.200 L11.300 3.400 Z M7.800 6.600 V11.600 L12 9.700 V4.800 Z"/></svg>
<span class="t" style="top:679.00px;font-size:11.6px;line-height:16px;color:#55555d;left:295.20px;white-space:pre;transform:scaleY(1.11);-webkit-text-stroke:.1px;"><span style="color:#0a1464">P000001</span> - Producto Creado 2</span>
<span class="t" style="top:679.00px;font-size:11.6px;line-height:16px;color:#505058;right:830.70px;transform:scaleY(1.11);-webkit-text-stroke:.1px;">0%</span>
<span class="t" style="top:679.00px;font-size:11.6px;line-height:16px;color:#505058;right:685.50px;transform:scaleY(1.11);-webkit-text-stroke:.1px;">666,00</span>
<span class="t" style="top:679.00px;font-size:11.6px;line-height:16px;color:#505058;right:530.70px;transform:scaleY(1.11);-webkit-text-stroke:.1px;">666,00</span>
<span class="t" style="top:679.00px;font-size:11.6px;line-height:16px;color:#505058;right:438.00px;transform:scaleY(1.11);-webkit-text-stroke:.1px;">1</span>
<span class="t" style="top:679.00px;font-size:11.6px;line-height:16px;color:#505058;right:146.30px;transform:scaleY(1.11);-webkit-text-stroke:.1px;">666,00</span>
<svg style="left:279px;top:723.6999999999999px" width="12.500" height="12.200" viewBox="0 0 14 13.600"><path fill-rule="evenodd" fill="#a8953c" d="M7 0 L13.600 2.600 V10.600 L7 13.600 L0.400 10.600 V2.600 Z M7 1.700 L2.700 3.400 L7 5.200 L11.300 3.400 Z M7.800 6.600 V11.600 L12 9.700 V4.800 Z"/></svg>
<span class="t" style="top:721.80px;font-size:11.6px;line-height:16px;color:#55555d;left:295.20px;white-space:pre;transform:scaleY(1.11);-webkit-text-stroke:.1px;"><span style="color:#0a1464">P000001_M</span> - Producto Creado 2 M</span>
<span class="t" style="top:722.80px;font-size:11.6px;line-height:16px;color:#505058;right:830.70px;transform:scaleY(1.11);-webkit-text-stroke:.1px;">0%</span>
<span class="t" style="top:722.80px;font-size:11.6px;line-height:16px;color:#505058;right:685.50px;transform:scaleY(1.11);-webkit-text-stroke:.1px;">300,00</span>
<span class="t" style="top:722.80px;font-size:11.6px;line-height:16px;color:#505058;right:530.70px;transform:scaleY(1.11);-webkit-text-stroke:.1px;">300,00</span>
<span class="t" style="top:722.80px;font-size:11.6px;line-height:16px;color:#505058;right:438.00px;transform:scaleY(1.11);-webkit-text-stroke:.1px;">1</span>
<span class="t" style="top:722.80px;font-size:11.6px;line-height:16px;color:#505058;right:146.30px;transform:scaleY(1.11);-webkit-text-stroke:.1px;">300,00</span>
<svg style="left:279px;top:767.6px" width="12.500" height="12.200" viewBox="0 0 14 13.600"><path fill-rule="evenodd" fill="#a8953c" d="M7 0 L13.600 2.600 V10.600 L7 13.600 L0.400 10.600 V2.600 Z M7 1.700 L2.700 3.400 L7 5.200 L11.300 3.400 Z M7.800 6.600 V11.600 L12 9.700 V4.800 Z"/></svg>
<span class="t" style="top:765.70px;font-size:11.6px;line-height:16px;color:#55555d;left:295.20px;white-space:pre;transform:scaleY(1.11);-webkit-text-stroke:.1px;"><span style="color:#0a1464">P000002_ROJO</span> - Nuevo Producto ROJO</span>
<span class="t" style="top:766.70px;font-size:11.6px;line-height:16px;color:#505058;right:830.70px;transform:scaleY(1.11);-webkit-text-stroke:.1px;">0%</span>
<span class="t" style="top:766.70px;font-size:11.6px;line-height:16px;color:#505058;right:685.50px;transform:scaleY(1.11);-webkit-text-stroke:.1px;">50,00</span>
<span class="t" style="top:766.70px;font-size:11.6px;line-height:16px;color:#505058;right:530.70px;transform:scaleY(1.11);-webkit-text-stroke:.1px;">50,00</span>
<span class="t" style="top:766.70px;font-size:11.6px;line-height:16px;color:#505058;right:438.00px;transform:scaleY(1.11);-webkit-text-stroke:.1px;">1</span>
<span class="t" style="top:766.70px;font-size:11.6px;line-height:16px;color:#505058;right:146.30px;transform:scaleY(1.11);-webkit-text-stroke:.1px;">50,00</span>
<svg style="left:279px;top:813.7px" width="12.500" height="9.500" viewBox="0 0 12.500 8.500" preserveAspectRatio="none"><path fill="#a8953c" d="M5.300 0H7.200V1H6.800V1.500C9.700 1.800 11.500 4 11.500 6.300H1C1 4 2.800 1.800 5.700 1.500V1H5.300ZM0 7H12.500V8.500H0Z"/></svg>
<span class="t" style="top:810.60px;font-size:11.6px;line-height:16px;color:#55555d;left:295.20px;white-space:pre;transform:scaleY(1.11);-webkit-text-stroke:.1px;"><span style="color:#0a1464;font-weight:700">101</span> - Chambre 101</span>
<span class="t" style="top:810.60px;font-size:11.6px;line-height:16px;color:#505058;right:830.70px;transform:scaleY(1.11);-webkit-text-stroke:.1px;">0%</span>
<span class="t" style="top:810.60px;font-size:11.6px;line-height:16px;color:#505058;right:685.50px;transform:scaleY(1.11);-webkit-text-stroke:.1px;">700,00</span>
<span class="t" style="top:810.60px;font-size:11.6px;line-height:16px;color:#505058;right:530.70px;transform:scaleY(1.11);-webkit-text-stroke:.1px;">700,00</span>
<span class="t" style="top:810.60px;font-size:11.6px;line-height:16px;color:#505058;right:438.00px;transform:scaleY(1.11);-webkit-text-stroke:.1px;">1</span>
<span class="t" style="top:810.60px;font-size:11.6px;line-height:16px;color:#505058;right:146.30px;transform:scaleY(1.11);-webkit-text-stroke:.1px;">700,00</span>
<svg style="left:481.7px;top:728.5px" width="9.5" height="9.5" viewBox="0 0 10 10"><circle cx="5" cy="5" r="5" fill="#c9c9cd"/><rect x="4.200" y="4.300" width="1.600" height="3.600" fill="#fff"/><rect x="4.200" y="2.100" width="1.600" height="1.500" fill="#fff"/></svg>
<svg style="left:512.5px;top:772.6px" width="9.5" height="9.5" viewBox="0 0 10 10"><circle cx="5" cy="5" r="5" fill="#c9c9cd"/><rect x="4.200" y="4.300" width="1.600" height="3.600" fill="#fff"/><rect x="4.200" y="2.100" width="1.600" height="1.500" fill="#fff"/></svg>
<div class="a" style="left:1847px;top:809px;width:35.300px;height:36px;border-radius:18px;background:#3f51b5;box-shadow:0 2px 7px rgba(0,0,0,.28);"></div>
<svg style="left:1858.400px;top:822.600px" width="12.200" height="8" viewBox="0 0 12.200 8"><path d="M1 1.200L6.100 6.300L11.200 1.200" stroke="#fff" stroke-width="2" fill="none"/></svg>
<div class="a" style="left:1847px;top:852px;width:35.300px;height:36px;border-radius:18px;background:#3f51b5;box-shadow:0 2px 7px rgba(0,0,0,.28);"></div>
<svg style="left:1856px;top:861.500px" width="17" height="17" viewBox="0 0 17 17"><path fill-rule="evenodd" fill="#fff" stroke="#fff" stroke-width="1.400" stroke-linejoin="round" d="M6.97 3.25 L7.03 0.95 L9.97 0.95 L10.03 3.25 L12.02 4.40 L14.05 3.30 L15.52 5.85 L13.55 7.05 L13.55 9.35 L15.52 10.55 L14.05 13.10 L12.02 12.00 L10.03 13.15 L9.97 15.45 L7.03 15.45 L6.97 13.15 L4.98 12.00 L2.95 13.10 L1.48 10.55 L3.45 9.35 L3.45 7.05 L1.48 5.85 L2.95 3.30 L4.98 4.40Z M5.39 8.20 a3.11 3.11 0 1 0 6.22 0 a3.11 3.11 0 1 0 -6.22 0Z"/></svg>
</body></html>
